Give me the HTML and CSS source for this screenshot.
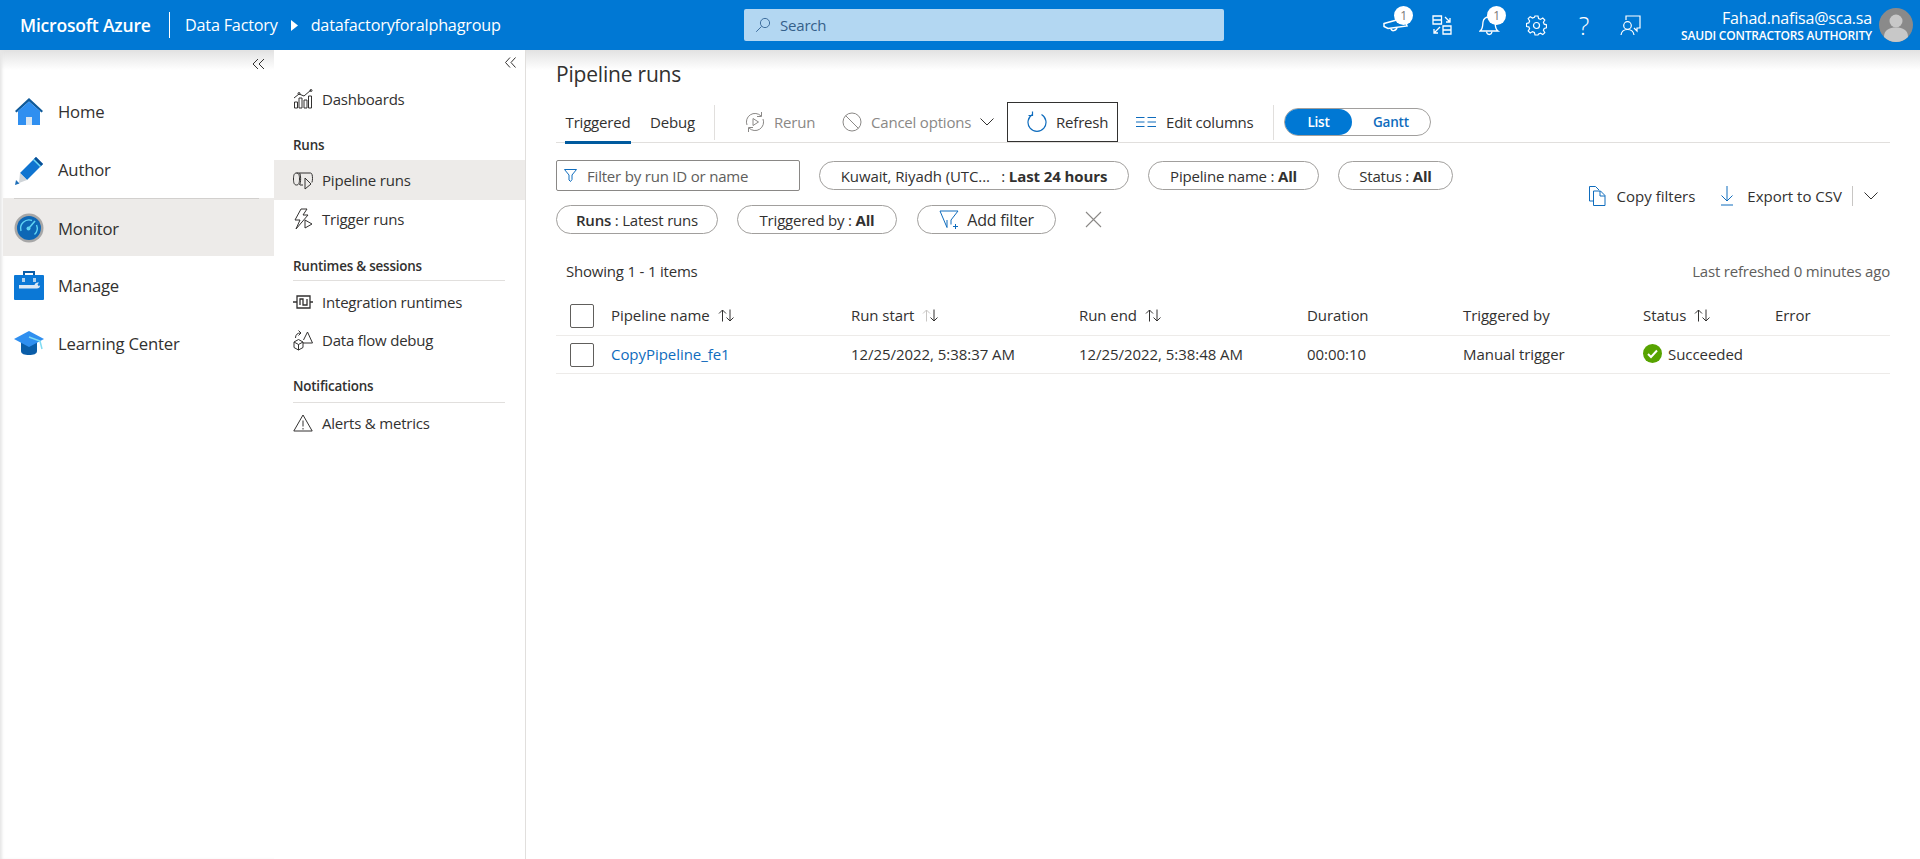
FILE: index.html
```html
<!DOCTYPE html>
<html lang="en">
<head>
    <meta charset="UTF-8">
    <title>Pipeline runs - Azure Data Factory</title>
    <link rel="stylesheet" href="styles.css">
</head>
<body>

<header class="topbar">
    <div class="brand">Microsoft Azure</div>
    <div class="crumbs">
        <span>Data Factory</span>
        <svg class="crumb-caret" width="7" height="11" viewBox="0 0 7 11"><path d="M0 0l7 5.500L0 11z" fill="#fff"/></svg>
        <span>datafactoryforalphagroup</span>
    </div>
    <div class="search">
        <svg width="16" height="16" viewBox="0 0 16 16" fill="none" stroke="#3f6f9f"><circle cx="10" cy="6" r="4.600"/><path d="M6.600 9.400L1.200 14.800"/></svg>
        <span>Search</span>
    </div>
    <div class="top-icons">
        <div class="top-icon icon-announce">
            <svg width="26" height="24" viewBox="0 0 26 24" fill="none" stroke="#fff" stroke-width="1.500"><path d="M1 10.500L21 5l3 8-19 2.500-4-2z"/><path d="M8 15.500c0 3 5 3 6-1"/></svg>
            <span class="badge">1</span>
        </div>
        <div class="top-icon icon-switch">
            <svg width="20" height="20" viewBox="0 0 20 20" fill="none" stroke="#fff" stroke-width="1.300"><path d="M1 1h8.500v8H1zM1 5h8.500M11 11h8v8h-8zM11 15h8"/><path d="M13 2l5 5M18 3v4h-4M8 12l-6 6M2 14v4h4"/></svg>
        </div>
        <div class="top-icon icon-bell">
            <svg width="22" height="24" viewBox="0 0 22 24" fill="none" stroke="#fff" stroke-width="1.300"><path d="M1 18c3-2 2.500-5 3-9 .5-3 3-5 6-5s5.500 2 6 5c.5 4 0 7 3 9z"/><path d="M7.500 18.500c.5 4 5 4 5.500 0"/></svg>
            <span class="badge">1</span>
        </div>
        <div class="top-icon icon-gear">
            <svg width="21" height="21" viewBox="0 0 21 21" fill="none" stroke="#fff" stroke-width="1.200"><circle cx="10.500" cy="10.500" r="3"/><path d="M9 1h3l.6 2.600 1.900.8 2.300-1.400 2 2-1.400 2.300.8 1.900 2.300.6v3l-2.300.6-.8 1.900 1.400 2.300-2 2-2.300-1.400-1.900.8L12 20H9l-.6-2.600-1.900-.8-2.300 1.400-2-2 1.400-2.300-.8-1.900L.5 11.500v-3l2.300-.6.800-1.900L2.200 3.700l2-2 2.300 1.400 1.900-.8z"/></svg>
        </div>
        <div class="top-icon icon-help">?</div>
        <div class="top-icon icon-feedback">
            <svg width="21" height="21" viewBox="0 0 21 21" fill="none" stroke="#fff" stroke-width="1.200"><path d="M6 5V1h14v12h-3v3l-3-3"/><circle cx="7.500" cy="10.500" r="3.800"/><path d="M1 20c.5-3.500 3-5.500 6.500-5.500S13.500 16.500 14 20"/></svg>
        </div>
    </div>
    <div class="account">
        <div class="account-text">
            <div class="account-name">Fahad.nafisa@sca.sa</div>
            <div class="account-org">SAUDI CONTRACTORS AUTHORITY</div>
        </div>
        <div class="avatar">
            <svg width="34" height="34" viewBox="0 0 34 34"><circle cx="17" cy="17" r="17" fill="#8a8a8a"/><circle cx="17" cy="13" r="6.500" fill="#c8c8c8"/><path d="M5 29c0-7 5-9.500 12-9.500S29 22 29 29a17 17 0 0 1-24 0z" fill="#c8c8c8"/></svg>
        </div>
    </div>
</header>

<div class="layout">
    <nav class="nav-main">
        <div class="collapse-row">
            <svg width="13" height="12" viewBox="0 0 13 12" fill="none" stroke="#323130"><path d="M6 1L1 6l5 5M12 1L7 6l5 5"/></svg>
        </div>
        <a class="nav-item nav-item-first">
            <svg width="30" height="30" viewBox="0 0 30 30"><path d="M15 1L1 14l1.500 1.500L15 4.500l12.500 11L29 14z" fill="#0f5a9a"/><path d="M4 14L15 4.500 26 14v14H4z" fill="#2f8ff0"/><path d="M12 20h6v8h-6z" fill="#d9e6f2"/></svg>
            <span>Home</span>
        </a>
        <a class="nav-item nav-item-last">
            <svg width="30" height="30" viewBox="0 0 30 30"><path d="M6 18L22 2l7 7-16 16z" fill="#0f74d0"/><path d="M20 4l7 7 2-2-7-7z" fill="#0a4f94"/><path d="M19 5l7 7 1-1-7-7z" fill="#6fdcf5"/><path d="M6 18l7 7-8 3z" fill="#cfd4d8"/><path d="M1 30l1-5 3.500 3.500z" fill="#1f6fb8"/></svg>
            <span>Author</span>
        </a>
        <a class="nav-item active">
            <svg width="30" height="30" viewBox="0 0 30 30" fill="none"><circle cx="15" cy="15" r="14.500" fill="#a7a7a7"/><circle cx="15" cy="15" r="12" fill="#0d67b5"/><path d="M7 18a8.500 8.500 0 0 1 11-10.500M22.500 12a8.500 8.500 0 0 1-2 9.500" stroke="#5fd3f3" stroke-width="1.400"/><path d="M15 15l6-7" stroke="#5fd3f3" stroke-width="1.600"/><circle cx="14.500" cy="15.500" r="2" fill="#5fd3f3"/></svg>
            <span>Monitor</span>
        </a>
        <a class="nav-item">
            <svg width="30" height="30" viewBox="0 0 30 30"><path d="M9 5V1h12v4h-2V3h-8v2z" fill="#0a5da8"/><rect y="5" width="30" height="25" rx="1" fill="#0b78d6"/><path d="M5 15h15.500c.5-2 2-2.500 4.500-2.500l-1.500 2 1.500 2 1-1.500c.500 2-1 4-5.500 3.500H5z" fill="#dbe8f4"/><path d="M8 8h3v4H8zM19 8h3v4h-3z" fill="#dbe8f4" opacity=".8"/></svg>
            <span>Manage</span>
        </a>
        <a class="nav-item">
            <svg width="30" height="30" viewBox="0 0 30 30"><path d="M7 14h16v9c0 3-3.500 4-8 4s-8-1-8-4z" fill="#0a5da8"/><path d="M15 3L0 11l15 8 15-8z" fill="#2f8ff0"/><path d="M15 9l11 4 2 8" fill="none" stroke="#7fdcf3" stroke-width="1.500"/></svg>
            <span>Learning Center</span>
        </a>
    </nav>

    <nav class="nav-sub">
        <div class="collapse-row">
            <svg width="11" height="11" viewBox="0 0 11 11" fill="none" stroke="#323130"><path d="M5 .5L.5 5.500 5 10.500M10.500 .5L6 5.500l4.500 5"/></svg>
        </div>
        <a class="sub-item sub-first">
            <svg width="20" height="20" viewBox="0 0 20 20" fill="none" stroke="#323130"><path d="M1.500 13h3v6h-3zM6 9h3v10H6zM11 11h3v8h-3zM15.500 7h3v12h-3z"/><path d="M1 9l5-4 5 2 7-6"/><circle cx="6" cy="4.500" r="1"/><circle cx="18" cy="1.500" r="1"/></svg>
            <span>Dashboards</span>
        </a>
        <div class="sub-head sub-head-runs">Runs</div>
        <a class="sub-item active">
            <svg width="20" height="20" viewBox="0 0 20 20" fill="none" stroke="#323130"><path d="M3.500 3C1 3 .5 5.500.5 9s.5 6 3 6 3-2.500 3-6-.5-6-3-6zM3.500 3h14c1.500 0 2 2.500 2 5.500 0 1.500-.2 3-.6 4M7 15h3"/><path d="M12 8v11l6-5z"/><path d="M6.500 3c1.500 1.500 1.500 10 0 12"/></svg>
            <span>Pipeline runs</span>
        </a>
        <a class="sub-item">
            <svg width="20" height="22" viewBox="0 0 20 22" fill="none" stroke="#323130"><path d="M8 1h6l-4 6h5L3 21l4-9H2zM12 12v8l7-4z"/></svg>
            <span>Trigger runs</span>
        </a>
        <div class="sub-head sub-head-rule">Runtimes &amp; sessions</div>
        <a class="sub-item">
            <svg width="20" height="14" viewBox="0 0 20 14" fill="none" stroke="#323130" stroke-width="1.300"><path d="M4 1h13v12H4zM0 7h4M17 7h3M7 10V4h3v6h4V4"/></svg>
            <span>Integration runtimes</span>
        </a>
        <a class="sub-item">
            <svg width="20" height="22" viewBox="0 0 20 22" fill="none" stroke="#323130"><path d="M1 13l4.500-2.500L10 13v5.500L5.500 21 1 18.500zM1 13l4.500 2.500L10 13M5.500 15.500V21M10 14h9.500L14.500 3l-4 8M2.500 9c0-3.500 2-5 5-5M5.500 1.500L8 4 5.500 6.500"/></svg>
            <span>Data flow debug</span>
        </a>
        <div class="sub-head sub-head-rule sub-head-notify">Notifications</div>
        <a class="sub-item">
            <svg width="20" height="18" viewBox="0 0 20 18" fill="none" stroke="#323130"><path d="M10 1L.8 17h18.400zM10 6.500v6M10 14v1.500"/></svg>
            <span>Alerts &amp; metrics</span>
        </a>
    </nav>

    <main class="content">
        <h1>Pipeline runs</h1>

        <div class="toolbar">
            <div class="tabs">
                <span class="tab selected">Triggered</span>
                <span class="tab">Debug</span>
            </div>
            <div class="tool disabled tool-rerun">
                <svg width="22" height="22" viewBox="0 0 22 22" fill="none" stroke="#8a8886"><path d="M3 14a8.500 8.500 0 0 1 14-9M19 8a8.500 8.500 0 0 1-14 9"/><path d="M17.500 1v4.500H13M4.500 21v-4.500H9M9 7.500v7l5.500-3.500z"/></svg>
                <span>Rerun</span>
            </div>
            <div class="tool disabled tool-cancel">
                <svg width="20" height="20" viewBox="0 0 20 20" fill="none" stroke="#8a8886"><circle cx="10" cy="10" r="9"/><path d="M3.600 3.600l12.800 12.800"/></svg>
                <span>Cancel options</span>
                <svg class="chev" width="14" height="8" viewBox="0 0 14 8" fill="none" stroke="#323130"><path d="M.5 .5L7 7l6.500-6.500"/></svg>
            </div>
            <div class="tool tool-refresh">
                <svg width="20" height="22" viewBox="0 0 20 22" fill="none" stroke="#0f6cbd" stroke-width="1.200"><path d="M5.500 3.500a9 9 0 1 0 9 0"/><path d="M5.500 .5v4H1.500"/></svg>
                <span>Refresh</span>
            </div>
            <div class="tool tool-columns">
                <svg width="20" height="12" viewBox="0 0 20 12" fill="none" stroke="#0f6cbd"><path d="M0 1.500h8.500M0 6h8.500M0 10.500h8.500M11.500 1.500H20M11.500 6H20M11.500 10.500H20"/></svg>
                <span>Edit columns</span>
            </div>
            <div class="view-toggle">
                <span class="toggle-on">List</span>
                <span class="toggle-off">Gantt</span>
            </div>
        </div>

        <div class="filter-area">
            <div class="filters">
                <div class="filter-input">
                    <svg width="13" height="13" viewBox="0 0 13 13" fill="none" stroke="#0f6cbd"><path d="M.5 .5h12L8 6v4.500L6.500 12.500 5 11V6z"/></svg>
                    <span>Filter by run ID or name</span>
                </div>
                <div class="pill pill-time"><span>Kuwait, Riyadh (UTC...&nbsp;&nbsp; : <b>Last 24 hours</b></span></div>
                <div class="pill pill-name"><span>Pipeline name : <b>All</b></span></div>
                <div class="pill pill-status"><span>Status : <b>All</b></span></div>
                <div class="pill pill-runs"><span><span class="pill-key">Runs</span> : Latest runs</span></div>
                <div class="pill pill-trigger"><span>Triggered by : <b>All</b></span></div>
                <div class="pill pill-add">
                    <svg width="20" height="20" viewBox="0 0 20 20" fill="none" stroke="#0f6cbd"><path d="M1 1h18l-7 9v4.500M8 10v7.500L1 1M14 16.500h5M16.500 14v5"/></svg>
                    <span>Add filter</span>
                </div>
                <svg class="clear-x" width="17" height="17" viewBox="0 0 17 17" fill="none" stroke="#8a8886" stroke-width="1.100"><path d="M1 1l15 15M16 1L1 16"/></svg>
            </div>
            <div class="actions">
                <div class="action action-copy">
                    <svg width="17" height="20" viewBox="0 0 17 20" fill="none" stroke="#0f6cbd"><path d="M4 15H.5V.5h6L10 4M4.500 5h7l4.500 4.500v10H4.500zM11 5v5h5"/></svg>
                    <span>Copy filters</span>
                </div>
                <div class="action action-export">
                    <svg width="14" height="20" viewBox="0 0 14 20" fill="none" stroke="#0f6cbd"><path d="M7 0v15M1.500 9.500L7 15l5.500-5.500M1 19h12"/></svg>
                    <span>Export to CSV</span>
                </div>
                <svg class="chev" width="14" height="8" viewBox="0 0 14 8" fill="none" stroke="#323130"><path d="M.5 .5L7 7l6.500-6.500"/></svg>
            </div>
        </div>

        <div class="summary">
            <span>Showing 1 - 1 items</span>
            <span class="refreshed">Last refreshed 0 minutes ago</span>
        </div>

        <div class="grid-row grid-head">
            <span class="check"></span>
            <span>Pipeline name <svg class="sort" width="17" height="13" viewBox="0 0 17 13" fill="none" stroke="#323130"><path d="M4.500 12.500V1M1 4.500L4.500 1 8 4.500M12 .5V12M8.500 8.500L12 12l3.500-3.500"/></svg></span>
            <span>Run start <svg class="sort" width="17" height="13" viewBox="0 0 17 13" fill="none" stroke="#323130"><path class="faded" d="M4.500 12.500V1M1 4.500L4.500 1 8 4.500"/><path d="M12 .5V12M8.500 8.500L12 12l3.500-3.500"/></svg></span>
            <span>Run end <svg class="sort" width="17" height="13" viewBox="0 0 17 13" fill="none" stroke="#323130"><path d="M4.500 12.500V1M1 4.500L4.500 1 8 4.500M12 .5V12M8.500 8.500L12 12l3.500-3.500"/></svg></span>
            <span>Duration</span>
            <span>Triggered by</span>
            <span>Status <svg class="sort" width="17" height="13" viewBox="0 0 17 13" fill="none" stroke="#323130"><path d="M4.500 12.500V1M1 4.500L4.500 1 8 4.500M12 .5V12M8.500 8.500L12 12l3.500-3.500"/></svg></span>
            <span>Error</span>
        </div>
        <div class="grid-row grid-body">
            <span class="check"></span>
            <a class="run-link">CopyPipeline_fe1</a>
            <span>12/25/2022, 5:38:37 AM</span>
            <span>12/25/2022, 5:38:48 AM</span>
            <span>00:00:10</span>
            <span>Manual trigger</span>
            <span class="status">
                <svg width="19" height="19" viewBox="0 0 19 19"><circle cx="9.500" cy="9.500" r="9.500" fill="#57a300"/><path d="M5 10l3 3 6-6.500" fill="none" stroke="#fff" stroke-width="2"/></svg>
                <span>Succeeded</span>
            </span>
            <span></span>
        </div>
    </main>
</div>

</body>
</html>
```

FILE: styles.css
```css
* {
    box-sizing: border-box;
}

html, body {
    height: 100%;
}

body {
    margin: 0;
    font-family: "Open Sans", "Noto Sans", Arial, sans-serif;
    font-size: 15px;
    letter-spacing: -0.2px;
    color: #323130;
    background-color: #fff;
    overflow: hidden;
}

a {
    color: inherit;
    text-decoration: none;
}

svg {
    flex: none;
}

/* Top bar */
.topbar {
    height: 50px;
    background-color: #0078d4;
    color: #fff;
    display: flex;
    align-items: center;
    padding-left: 20px;
}

.brand {
    width: 150px;
    height: 26px;
    line-height: 26px;
    font-size: 17.5px;
    font-weight: 600;
    border-right: 1px solid #fff;
    white-space: nowrap;
}

.crumbs {
    display: flex;
    align-items: center;
    gap: 13px;
    width: 574px;
    padding-left: 15px;
    font-size: 16.2px;
}

.search {
    width: 480px;
    height: 32px;
    border-radius: 2px;
    background-color: #b3d7f2;
    color: #35608a;
    display: flex;
    align-items: center;
    gap: 9px;
    padding-left: 11px;
}

.top-icons {
    display: flex;
    align-items: center;
    margin-left: 159px;
    height: 50px;
}

.top-icon {
    position: relative;
    display: flex;
    align-items: center;
    justify-content: center;
}

.icon-announce {
    width: 26px;
}

.icon-switch {
    width: 20px;
    margin-left: 23px;
}

.icon-bell {
    width: 22px;
    margin-left: 27px;
}

.icon-gear {
    width: 21px;
    margin-left: 25px;
}

.icon-help {
    width: 16px;
    margin-left: 29px;
    font-size: 25px;
    font-weight: 300;
}

.icon-feedback {
    width: 21px;
    margin-left: 28px;
}

.badge {
    position: absolute;
    top: -7px;
    right: -4px;
    width: 19px;
    height: 19px;
    line-height: 19px;
    border-radius: 50%;
    background-color: #fff;
    color: #777;
    font-size: 12px;
    text-align: center;
}

.icon-bell .badge {
    right: -5px;
}

.account {
    flex: 1;
    display: flex;
    justify-content: flex-end;
    align-items: center;
    gap: 7px;
    padding-right: 7px;
}

.account-text {
    text-align: right;
}

.account-name {
    font-size: 16px;
    line-height: 20px;
}

.account-org {
    font-size: 12px;
    font-weight: 600;
    line-height: 15px;
}

.avatar {
    height: 34px;
}

/* Navigation columns */
.layout {
    display: flex;
    height: calc(100% - 50px);
}

.nav-main {
    width: 274px;
    flex: none;
    padding-top: 2px;
    background: linear-gradient(to bottom, #e2e2e2, #fff 20px);
    box-shadow: inset 3px 0 3px -1px #e6e6e6;
}

.collapse-row {
    height: 24px;
    display: flex;
    align-items: center;
    justify-content: flex-end;
    padding-right: 9px;
}

.nav-item {
    display: flex;
    align-items: center;
    gap: 14px;
    height: 58px;
    padding-left: 14px;
    font-size: 16.7px;
    font-weight: 500;
}

.nav-item-first {
    margin-top: 6px;
    height: 59px;
}

.nav-item-last {
    height: 57px;
}

.nav-item.active {
    position: relative;
    height: 58px;
    margin-left: 3px;
    padding-left: 11px;
    padding-top: 2px;
    background-color: #edebe9;
}

.nav-item.active::before {
    content: "";
    position: absolute;
    top: 0;
    left: 11px;
    width: 245px;
    border-top: 1px solid #d2d0ce;
}

.nav-sub {
    width: 252px;
    flex: none;
    border-right: 1px solid #e1dfdd;
}

.nav-sub .collapse-row {
    padding-right: 9px;
}

.sub-item {
    display: flex;
    align-items: center;
    gap: 9px;
    height: 38px;
    padding-left: 19px;
    font-size: 15px;
}

.sub-first {
    margin-top: 6px;
}

.sub-item.active {
    height: 40px;
    background-color: #edebe9;
}

.sub-head {
    margin: 0 20px 0 19px;
    font-size: 13.4px;
    font-weight: 600;
}

.sub-head-runs {
    padding-top: 17px;
    height: 42px;
    line-height: 20px;
}

.sub-head-rule {
    height: 43px;
    padding-top: 18px;
    line-height: 20px;
    border-bottom: 1px solid #e1dfdd;
    margin-bottom: 2px;
}

.sub-head-notify {
    height: 44px;
    padding-top: 17px;
    margin-bottom: 1px;
}

/* Main column */
.content {
    flex: 1;
    padding: 0 30px;
    background: linear-gradient(to bottom, #e2e2e2, #fff 20px);
}

h1 {
    margin: 0;
    padding-top: 9px;
    height: 52px;
    line-height: 30px;
    font-size: 21px;
    font-weight: 500;
}

.toolbar {
    display: flex;
    align-items: center;
    height: 41px;
    border-bottom: 1px solid #e1dfdd;
}

.tabs {
    position: relative;
    display: flex;
    align-items: stretch;
    gap: 19px;
    width: 159px;
    height: 41px;
    padding-left: 9px;
}

.tabs::after {
    content: "";
    position: absolute;
    right: 0;
    top: 3px;
    bottom: 3px;
    border-right: 1px solid #e1dfdd;
}

.tab {
    padding-top: 8px;
    line-height: 24px;
    margin-bottom: -1px;
}

.tab.selected {
    width: 66px;
    text-align: center;
    border-bottom: 3px solid #005a9e;
}

.tool {
    display: flex;
    align-items: center;
    gap: 9px;
    height: 40px;
    flex: none;
}

.tool.disabled {
    color: #8a8886;
}

.tool-rerun {
    margin-left: 29px;
    width: 98px;
    gap: 8px;
}

.tool-cancel {
    width: 165px;
}

.tool-cancel .chev {
    margin-left: 0;
}

.tool-refresh {
    width: 111px;
    padding-left: 19px;
    border: 1px solid #323130;
}

.tool-columns {
    margin-left: 18px;
    gap: 10px;
    width: 138px;
    height: 35px;
    border-right: 1px solid #e1dfdd;
}

.view-toggle {
    margin-left: 10px;
    width: 147px;
    height: 28px;
    border: 1px solid #a19f9d;
    border-radius: 14px;
    display: flex;
    align-items: center;
    font-size: 13.5px;
    font-weight: 600;
}

.toggle-on {
    width: 67px;
    height: 26px;
    line-height: 26px;
    border-radius: 13px;
    background-color: #0078d4;
    color: #fff;
    text-align: center;
}

.toggle-off {
    margin-left: 21px;
    color: #0f6cbd;
}

/* Filters */
.filter-area {
    display: flex;
    height: 117px;
}

.filters {
    width: 920px;
    display: flex;
    flex-wrap: wrap;
    align-items: center;
    align-content: flex-start;
    column-gap: 19px;
    row-gap: 14px;
    padding-top: 17px;
}

.filter-input {
    width: 244px;
    height: 31px;
    border: 1px solid #8a8886;
    border-radius: 2px;
    display: flex;
    align-items: center;
    gap: 10px;
    padding-left: 7px;
    color: #605e5c;
}

.pill {
    height: 29px;
    border: 1px solid #a19f9d;
    border-radius: 15px;
    display: flex;
    align-items: center;
    justify-content: center;
    white-space: nowrap;
}

.pill b {
    font-weight: 700;
}

.pill-key {
    font-weight: 600;
}

.pill-time {
    width: 310px;
    letter-spacing: -0.1px;
}

.pill-name {
    width: 171px;
}

.pill-status {
    width: 115px;
}

.pill-runs {
    width: 162px;
}

.pill-trigger {
    width: 160px;
}

.pill-add {
    width: 139px;
    margin-left: 1px;
    gap: 8px;
    font-size: 16px;
}

.clear-x {
    margin-left: 10px;
}

.actions {
    flex: 1;
    display: flex;
    align-items: center;
    justify-content: flex-end;
    height: 50px;
    margin-top: 28px;
    padding-right: 12px;
}

.action {
    display: flex;
    align-items: center;
    gap: 11px;
    letter-spacing: 0;
}

.action-export {
    margin-left: 25px;
    gap: 13px;
    padding-right: 10px;
    border-right: 1px solid #c8c6c4;
}

.actions .chev {
    margin-left: 11px;
}

.summary {
    display: flex;
    justify-content: space-between;
    padding-left: 10px;
    height: 24px;
    line-height: 22px;
}

.refreshed {
    color: #605e5c;
}

/* Runs table */
.grid-row {
    display: grid;
    grid-template-columns: 55px 240px 228px 228px 156px 180px 132px 1fr;
    align-items: center;
    border-bottom: 1px solid #edebe9;
}

.grid-row > span:not(.check),
.grid-row > a {
    padding-bottom: 2px;
}

.grid-head {
    height: 40px;
    margin-top: 12px;
    font-weight: 500;
    letter-spacing: -0.05px;
}

.grid-body {
    height: 38px;
    letter-spacing: -0.05px;
}

.check {
    width: 24px;
    height: 24px;
    margin-left: 14px;
    border: 1px solid #605e5c;
    border-radius: 2px;
}

.sort {
    margin-left: 4px;
    vertical-align: -1px;
}

.faded {
    stroke: #c8c6c4;
}

.run-link {
    color: #0f6cbd;
}

.status {
    display: flex;
    align-items: center;
    gap: 6px;
}
```
